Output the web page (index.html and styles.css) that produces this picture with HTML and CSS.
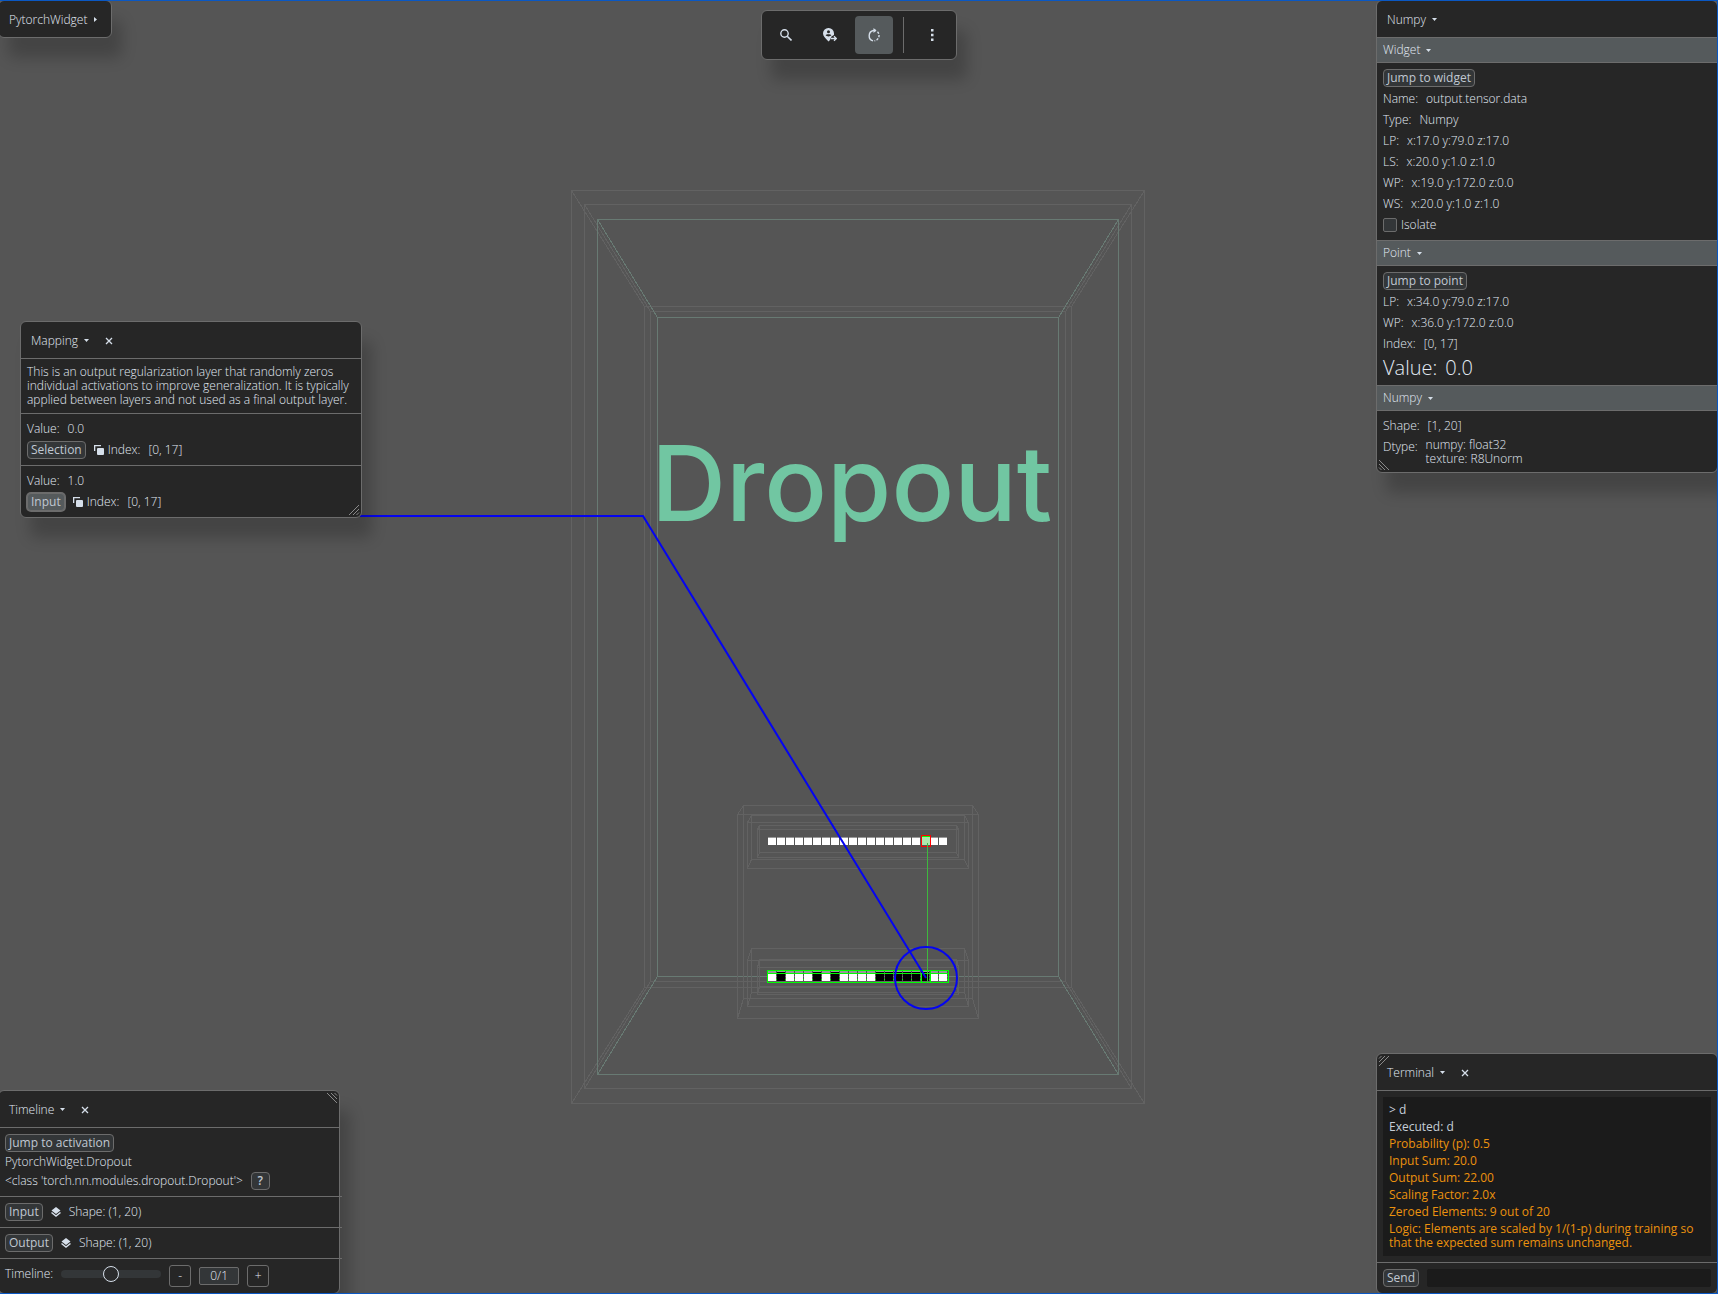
FILE: index.html
```html
<!DOCTYPE html>
<html lang="en">
<head>
    <meta charset="UTF-8">
    <meta name="viewport" content="width=device-width, initial-scale=1.0">
    <title>PytorchWidget</title>
    <link rel="stylesheet" href="styles.css">
</head>
<body>

<!-- shared icons -->
<svg class="sprite" aria-hidden="true">
    <symbol id="arrow" viewBox="0 0 5 5"><path d="M0 1h5L2.5 4z"/></symbol>
    <symbol id="arrow-right" viewBox="0 0 5 5"><path d="M1 0v5L4 2.5z"/></symbol>
    <symbol id="close" viewBox="0 0 8 8"><path d="M1 1l6 6M7 1l-6 6" fill="none" stroke="currentColor" stroke-width="1.3"/></symbol>
    <symbol id="copy" viewBox="0 0 10 10"><path d="M0 0h7v1.300H1.300V6H0z"/><rect x="3" y="3" width="7" height="7" rx="1"/></symbol>
    <symbol id="layers" viewBox="0 0 10 10"><path d="M5 0l4.5 3.5L5 7 .5 3.5z"/><path d="M.5 5.5L5 9l4.5-3.5" fill="none" stroke="currentColor" stroke-width="1.5"/></symbol>
    <symbol id="grip" viewBox="0 0 12 12"><path d="M1 11L11 1M5 11l6-6M8.5 11L11 8.5" fill="none" stroke="currentColor"/></symbol>
</svg>

<main class="app">
    <svg class="scene" viewBox="0 0 1718 1294" aria-label="Dropout layer">
        <!-- model boxes -->
        <g class="wire">
            <path d="M571.5 190.5H1144.5V1103.5H571.5zM644.5 306.5H1071.5V987.5H644.5z"/>
            <path d="M571.5 190.5L644.5 306.5M1144.5 190.5L1071.5 306.5M1144.5 1103.5L1071.5 987.5M571.5 1103.5L644.5 987.5"/>
            <path d="M584.5 204.5H1131.5V1088.5H584.5zM650.5 311.5H1065.5V981.5H650.5z"/>
            <path d="M584.5 204.5L650.5 311.5M1131.5 204.5L1065.5 311.5M1131.5 1088.5L1065.5 981.5M584.5 1088.5L650.5 981.5"/>
            <path class="wire-active" d="M597.5 219.5H1118.5V1074.5H597.5zM657.5 317.5H1058.5V976.5H657.5z"/>
            <path class="wire-active" d="M597.5 219.5L657.5 317.5M1118.5 219.5L1058.5 317.5M1118.5 1074.5L1058.5 976.5M597.5 1074.5L657.5 976.5"/>
        </g>
        <text class="layer-name" x="651" y="521">Dropout</text>

        <!-- tensor boxes -->
        <g class="wire">
            <path d="M737.5 814.5H978.5V1018.5H737.5zM743.5 805.5H972.5V998.5H743.5z"/>
            <path d="M737.5 814.5L743.5 805.5M978.5 814.5L972.5 805.5M978.5 1018.5L972.5 998.5M737.5 1018.5L743.5 998.5"/>
            <path d="M747.5 822.5H968.5V868.5H747.5zM751.5 815.5H964.5V859.5H751.5z"/>
            <path d="M747.5 822.5L751.5 815.5M968.5 822.5L964.5 815.5M968.5 868.5L964.5 859.5M747.5 868.5L751.5 859.5"/>
            <path d="M757.5 829.5H958.5V857.5H757.5zM759.5 825.5H956.5V852.5H759.5z"/>
            <path d="M757.5 829.5L759.5 825.5M958.5 829.5L956.5 825.5M958.5 857.5L956.5 852.5M757.5 857.5L759.5 852.5"/>
            <path d="M747.5 960.5H968.5V1006.5H747.5zM751.5 948.5H964.5V992.5H751.5z"/>
            <path d="M747.5 960.5L751.5 948.5M968.5 960.5L964.5 948.5M968.5 1006.5L964.5 992.5M747.5 1006.5L751.5 992.5"/>
            <path d="M757.5 967.5H958.5V994.5H757.5zM759.5 959.5H956.5V986.5H759.5z"/>
            <path d="M757.5 967.5L759.5 959.5M958.5 967.5L956.5 959.5M958.5 994.5L956.5 986.5M757.5 994.5L759.5 986.5"/>
        </g>

        <!-- input tensor -->
        <path class="cells cells-top" d="M768 837.5H948"/>
        <path class="cells" d="M768 841.5H948" stroke-width="7"/>
        <rect x="922" y="837" width="8" height="8" fill="#aee6ae"/>
        <rect class="selected" x="921.5" y="835.5" width="9" height="11"/>
        <path class="outline" d="M922 836.5H930"/>

        <!-- output tensor -->
        <path class="cells cells-top" d="M768 972H948" stroke-width="2"/>
        <path class="outline" d="M768 979.5H948"/>
        <path class="cells" d="M768 977.5H948" stroke-width="7"/>
        <path class="zeros" d="M777 976.5h8M813 976.5h8M831 976.5h8M876 976.5h8M885 976.5h8M894 976.5h8M903 976.5h8M912 976.5h8M921 976.5h8"/>
        <path class="outline" d="M767.5 970.5H948.5V982.5H767.5zM767.5 973.5H948.5M921.5 973.5V982.5M930.5 970.5V982.5"/>

        <path class="link" d="M927.5 843V983"/>
        <path class="pointer" d="M360 516H643L926 978"/>
        <circle class="pointer" cx="926" cy="978" r="31"/>
    </svg>

    <section class="panel panel-root">
        <header class="title"><button class="fold">PytorchWidget <svg class="ico-5"><use href="#arrow-right"/></svg></button></header>
    </section>

    <nav class="panel toolbar">
        <button class="tool" aria-label="Search">
            <svg viewBox="0 0 12 12"><circle cx="4.5" cy="4.5" r="3.7" fill="none" stroke="currentColor" stroke-width="1.4"/><path d="M7.2 7.2L11.5 11.5" stroke="currentColor" stroke-width="1.6"/></svg>
        </button>
        <button class="tool" aria-label="Go to location">
            <svg class="ico-14" viewBox="0 0 14 14"><path fill-rule="evenodd" d="M5.500 0A5.400 5.400 0 0 1 11 5.300V7L8.500 8.500 7 12l-1.500 1.500C2 10 0 8 0 5.300A5.400 5.400 0 0 1 5.500 0zM5.500 2.200a1.500 1.500 0 1 0 0 3 1.500 1.500 0 0 0 0-3zM2.600 7.300C4 8.800 7 8.800 8.400 7.300 7.500 5.900 3.500 5.900 2.600 7.300z"/><path d="M8 10.5h5M11 8.2l2.400 2.300L11 12.800" fill="none" stroke="currentColor" stroke-width="1.3"/></svg>
        </button>
        <button class="tool tool-on" aria-label="Rotate">
            <svg class="ico-14" viewBox="0 0 14 14"><path d="M6 12.800A5.300 5.300 0 0 1 6.500 2.500H9" fill="none" stroke="currentColor" stroke-width="1.4"/><path d="M6.500 0L9.500 2.500 6.500 5z"/><path d="M10.500 3.800a5.300 5.300 0 0 1-3 9" fill="none" stroke="currentColor" stroke-width="1.4" stroke-dasharray="2.2 1.4"/></svg>
        </button>
        <span class="tool-sep"></span>
        <button class="tool" aria-label="More">
            <svg viewBox="0 0 12 12"><path d="M5 0h2.500v2.500H5zM5 4.700h2.500v2.500H5zM5 9.400h2.500v2.500H5z"/></svg>
        </button>
    </nav>

    <section class="panel panel-mapping">
        <header class="title">
            <button class="fold">Mapping <svg class="ico-5"><use href="#arrow"/></svg></button>
            <button class="close" aria-label="Close"><svg class="ico-8"><use href="#close"/></svg></button>
        </header>
        <div class="body"><p>This is an output regularization layer that randomly zeros individual activations to improve generalization. It is typically applied between layers and not used as a final output layer.</p></div>
        <div class="body">
            <div class="row"><span>Value:</span><span>0.0</span></div>
            <div class="row"><button class="btn">Selection</button><span class="with-icon"><svg class="ico-10"><use href="#copy"/></svg>Index:</span><span>[0, 17]</span></div>
        </div>
        <div class="body">
            <div class="row"><span>Value:</span><span>1.0</span></div>
            <div class="row"><button class="btn btn-hover">Input</button><span class="with-icon"><svg class="ico-10"><use href="#copy"/></svg>Index:</span><span>[0, 17]</span></div>
        </div>
        <svg class="grip grip-br"><use href="#grip"/></svg>
    </section>

    <section class="panel panel-numpy">
        <header class="title"><button class="fold">Numpy <svg class="ico-5"><use href="#arrow"/></svg></button></header>
        <button class="bar">Widget <svg class="ico-5"><use href="#arrow"/></svg></button>
        <div class="body">
            <div class="row"><button class="btn">Jump to widget</button></div>
            <div class="row"><span>Name:</span><span>output.tensor.data</span></div>
            <div class="row"><span>Type:</span><span>Numpy</span></div>
            <div class="row"><span>LP:</span><span>x:17.0 y:79.0 z:17.0</span></div>
            <div class="row"><span>LS:</span><span>x:20.0 y:1.0 z:1.0</span></div>
            <div class="row"><span>WP:</span><span>x:19.0 y:172.0 z:0.0</span></div>
            <div class="row"><span>WS:</span><span>x:20.0 y:1.0 z:1.0</span></div>
            <label class="check"><input type="checkbox"> Isolate</label>
        </div>
        <button class="bar">Point <svg class="ico-5"><use href="#arrow"/></svg></button>
        <div class="body">
            <div class="row"><button class="btn">Jump to point</button></div>
            <div class="row"><span>LP:</span><span>x:34.0 y:79.0 z:17.0</span></div>
            <div class="row"><span>WP:</span><span>x:36.0 y:172.0 z:0.0</span></div>
            <div class="row"><span>Index:</span><span>[0, 17]</span></div>
            <div class="row row-big"><span>Value:</span><span>0.0</span></div>
        </div>
        <button class="bar">Numpy <svg class="ico-5"><use href="#arrow"/></svg></button>
        <div class="body">
            <div class="row"><span>Shape:</span><span>[1, 20]</span></div>
            <div class="row"><span>Dtype:</span><p>numpy: float32<br>texture: R8Unorm</p></div>
        </div>
        <svg class="grip grip-bl"><use href="#grip"/></svg>
    </section>

    <section class="panel panel-timeline">
        <header class="title">
            <button class="fold">Timeline <svg class="ico-5"><use href="#arrow"/></svg></button>
            <button class="close" aria-label="Close"><svg class="ico-8"><use href="#close"/></svg></button>
        </header>
        <div class="body">
            <div class="row"><button class="btn">Jump to activation</button></div>
            <p>PytorchWidget.Dropout</p>
            <div class="row"><span>&lt;class 'torch.nn.modules.dropout.Dropout'&gt;</span><button class="btn btn-help">?</button></div>
        </div>
        <div class="body wide">
            <div class="row"><button class="btn">Input</button><svg class="ico-10"><use href="#layers"/></svg><span>Shape: (1, 20)</span></div>
        </div>
        <div class="body wide">
            <div class="row"><button class="btn">Output</button><svg class="ico-10"><use href="#layers"/></svg><span>Shape: (1, 20)</span></div>
        </div>
        <div class="body wide">
            <div class="row">
                <label for="time">Timeline:</label>
                <input class="slider" id="time" type="range" min="0" max="2" value="1">
                <button class="step">-</button>
                <button class="count">0/1</button>
                <button class="step">+</button>
            </div>
        </div>
        <svg class="grip grip-tr"><use href="#grip"/></svg>
    </section>

    <section class="panel panel-terminal">
        <header class="title">
            <button class="fold">Terminal <svg class="ico-5"><use href="#arrow"/></svg></button>
            <button class="close" aria-label="Close"><svg class="ico-8"><use href="#close"/></svg></button>
        </header>
        <div class="body">
            <div class="log">
                <p>&gt; d</p>
                <p>Executed: d</p>
                <p class="out">Probability (p): 0.5</p>
                <p class="out">Input Sum: 20.0</p>
                <p class="out">Output Sum: 22.00</p>
                <p class="out">Scaling Factor: 2.0x</p>
                <p class="out">Zeroed Elements: 9 out of 20</p>
                <p class="out">Logic: Elements are scaled by 1/(1-p) during training so that the expected sum remains unchanged.</p>
            </div>
        </div>
        <form class="body">
            <div class="row"><button class="btn" type="button">Send</button><input class="cmd" type="text" aria-label="Command"></div>
        </form>
        <svg class="grip grip-tl"><use href="#grip"/></svg>
    </section>
</main>

</body>
</html>
```
FILE: styles.css
```css
*{margin: 0; padding: 0; box-sizing: border-box;}

body{
    height: 100vh;
    overflow: hidden;
    background: #555;
    color: #e2eaf4;
    font: 300 12px/14px "Open Sans", "Noto Sans", sans-serif;
}
button, input{
    font: inherit;
    color: inherit;
    background: none;
    border: 0;
}
svg{fill: currentColor; color: #d6dfea; flex: none;}
.sprite{position: absolute; width: 0; height: 0;}

.app{
    position: relative;
    height: 100%;
    overflow: hidden;
}
/* window focus frame */
.app::after{
    content: "";
    position: absolute;
    inset: 0;
    border: 1px solid #0a58c4;
    border-left: 0;
    pointer-events: none;
}

/* scene */
.scene{
    display: block;
    width: 100%;
    height: 100%;
    fill: none;
}
.wire{stroke: #626262; shape-rendering: crispEdges;}
.wire-active{stroke: #687a73;}
.layer-name{
    font: 500 104px Inter, sans-serif;
    fill: #71c6a2;
}
.cells{
    stroke: #fff;
    stroke-dasharray: 8 1;
    shape-rendering: crispEdges;
}
.cells-top{stroke: #999;}
.zeros{stroke: #000; stroke-width: 9;}
.outline{stroke: #0f0; shape-rendering: crispEdges;}
.selected{stroke: #f00; shape-rendering: crispEdges;}
.link{stroke: #3eb83e;}
.pointer{stroke: #0505f0; stroke-width: 2;}

/* panels */
.panel{
    position: absolute;
    background: #262626;
    border: 1px solid #6c6c6c;
    border-radius: 6px;
    box-shadow: 10px 20px 15px rgba(0, 0, 0, .2);
}
.panel-mapping, .panel-numpy, .panel-timeline, .panel-terminal{width: 342px;}
.panel-root{top: 0; left: -2px; width: 114px;}
.panel-mapping{top: 321px; left: 20px;}
.panel-numpy{top: 0; right: 0;}
.panel-timeline{bottom: 0; left: -2px;}
.panel-terminal{bottom: 0; right: 0;}

.title{
    display: flex;
    align-items: center;
    gap: 16px;
    height: 37px;
    margin-bottom: -1px;
    padding: 0 10px;
}
.fold, .bar{
    display: flex;
    align-items: center;
    gap: 6px;
}
.close{display: flex;}
.bar{
    width: 100%;
    height: 26px;
    padding: 0 6px;
    background: #555a5c;
    border-top: 1px solid #6c6c6c;
    border-bottom: 1px solid #6c6c6c;
}
.body{
    display: flex;
    flex-direction: column;
    gap: 3px;
    padding: 6px;
    border-top: 1px solid #6c6c6c;
}
.bar + .body{border-top: 0;}
.wide{margin-right: -3px;}

.row{
    display: flex;
    gap: 8px;
    line-height: 18px;
}
.row > svg{align-self: center;}
.row p{line-height: 14px;}
.row-big{font-size: 20px; line-height: 23px;}
.with-icon{display: flex; align-items: center; gap: 4px;}

.btn{
    height: 18px;
    padding: 0 3px;
    font-weight: 400;
    line-height: 16px;
    color: #c0c8d2;
    background: #333638;
    border: 1px solid #6c6c6c;
    border-radius: 4px;
}
.btn-hover{
    background: #555a5c;
    box-shadow: 0 0 0 1px #6c6c6c;
}
.btn-help{width: 19px; font-weight: 600;}

.check{
    display: flex;
    align-items: center;
    gap: 4px;
    height: 18px;
}
.check input{
    appearance: none;
    width: 14px;
    height: 14px;
    background: #333638;
    border: 1px solid #6c6c6c;
    border-radius: 2px;
}

/* toolbar */
.toolbar{
    top: 10px;
    left: 50%;
    transform: translateX(-50%);
    display: flex;
    align-items: center;
    gap: 6px;
    padding: 5px;
}
.tool{
    display: flex;
    align-items: center;
    justify-content: center;
    width: 38px;
    height: 38px;
    border-radius: 4px;
}
.tool svg{width: 12px; height: 12px;}
.tool .ico-14{width: 14px; height: 14px;}
.tool-on{background: #555a5c;}
.tool-sep{
    width: 1px;
    height: 36px;
    margin: 0 3px 0 4px;
    background: #6c6c6c;
}

/* timeline */
.slider{
    appearance: none;
    width: 100px;
    height: 8px;
    margin-top: 5px;
    background: #333638;
    border-radius: 4px;
}
.slider::-webkit-slider-thumb{
    appearance: none;
    width: 16px;
    height: 16px;
    background: #2a2b2c;
    border: 1px solid #d6dfea;
    border-radius: 50%;
}
.step{
    width: 22px;
    height: 22px;
    border: 1px solid #6c6c6c;
    border-radius: 3px;
}
.count{
    width: 40px;
    height: 18px;
    margin-top: 2px;
    background: #333638;
    border: 1px solid #6c6c6c;
    border-radius: 2px;
    line-height: 16px;
}

/* terminal */
.log{
    display: flex;
    flex-direction: column;
    gap: 3px;
    padding: 6px;
    background: #1b1b1b;
    color: #c6ced8;
    font-weight: 400;
}
.out{color: #ec920e;}
.cmd{
    flex: 1;
    min-width: 0;
    height: 18px;
    padding: 0 4px;
    background: #1b1b1b;
    border-radius: 2px;
}

.ico-5{width: 5px; height: 5px;}
.ico-8{width: 8px; height: 8px;}
.ico-10{width: 10px; height: 10px;}

.grip{
    position: absolute;
    width: 12px;
    height: 12px;
    color: #8a8a8a;
}
.grip-br{right: 1px; bottom: 1px;}
.grip-bl{left: 1px; bottom: 1px; transform: scaleX(-1);}
.grip-tr{right: 1px; top: 1px; transform: scaleY(-1);}
.grip-tl{left: 1px; top: 1px; transform: scale(-1);}
```
